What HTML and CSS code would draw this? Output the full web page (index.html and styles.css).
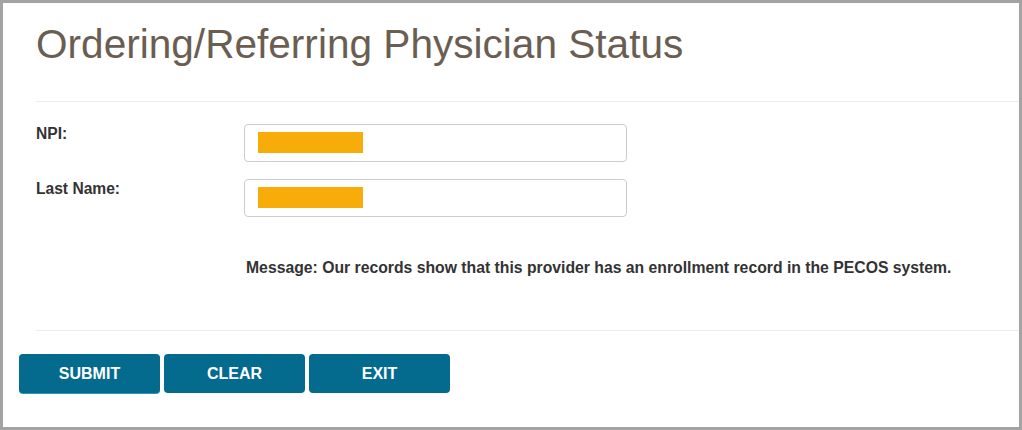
FILE: index.html
```html
<!DOCTYPE html>
<html lang="en">
<head>
<meta charset="utf-8">
<title>Ordering/Referring Physician Status</title>
<link rel="stylesheet" href="styles.css">
</head>
<body>
<div class="frame">
  <div class="content">
    <h1 class="title">Ordering/Referring Physician Status</h1>
    <hr class="rule">
    <form class="form">
      <div class="row">
        <label class="label" for="npi">NPI:</label>
        <div class="field" id="npi"><span class="redact"></span></div>
      </div>
      <div class="row">
        <label class="label" for="lname">Last Name:</label>
        <div class="field" id="lname"><span class="redact"></span></div>
      </div>
      <p class="message">Message: Our records show that this provider has an enrollment record in the PECOS system.</p>
    </form>
    <hr class="rule rule-bottom">
  </div>
  <div class="actions">
    <button class="btn btn-focus" type="button">SUBMIT</button>
    <button class="btn" type="button">CLEAR</button>
    <button class="btn" type="button">EXIT</button>
  </div>
</div>
</body>
</html>
```
FILE: styles.css
```css
html, body {
  margin: 0;
  padding: 0;
  background: #ffffff;
}

.frame {
  box-sizing: border-box;
  width: 1022px;
  height: 430px;
  border: 3px solid #a3a3a3;
  font-family: "Liberation Sans", Arial, sans-serif;
  color: #333333;
}

.content {
  padding-left: 33px;
}

.title {
  margin: 0;
  padding-top: 18px;
  font-size: 40.6px;
  line-height: 46px;
  font-weight: normal;
  color: #6a5e53;
}

.rule {
  margin: 34px 0 0 0;
  border: 0;
  border-top: 1px solid #ebebeb;
  height: 0;
}

.form {
  margin: 22px 0 0 0;
  display: flex;
  flex-direction: column;
  gap: 17px;
}

.row {
  display: grid;
  grid-template-columns: 208px 383px;
  align-items: start;
}

.label {
  font-size: 15.6px;
  line-height: 20px;
  font-weight: bold;
  color: #333333;
}

.field {
  box-sizing: border-box;
  height: 38px;
  border: 1px solid #cccccc;
  border-radius: 4px;
  padding: 7px 0 0 13px;
}

.redact {
  display: block;
  width: 105px;
  height: 21px;
  background: #f7ac0a;
}

.message {
  margin: 24px 0 0 210px;
  font-size: 15.76px;
  line-height: 20px;
  font-weight: bold;
  color: #333333;
}

.rule-bottom {
  margin-top: 52px;
}

.actions {
  display: flex;
  gap: 4px;
  padding: 23px 0 0 16px;
}

.btn {
  box-sizing: border-box;
  width: 141px;
  height: 39px;
  border: 0;
  border-radius: 4px;
  background: #056b8e;
  color: #ffffff;
  font-family: "Liberation Sans", Arial, sans-serif;
  font-size: 16px;
  font-weight: bold;
  padding: 0;
}

.btn-focus {
  box-shadow: 0 1px 0 #2b95b8;
}
```
